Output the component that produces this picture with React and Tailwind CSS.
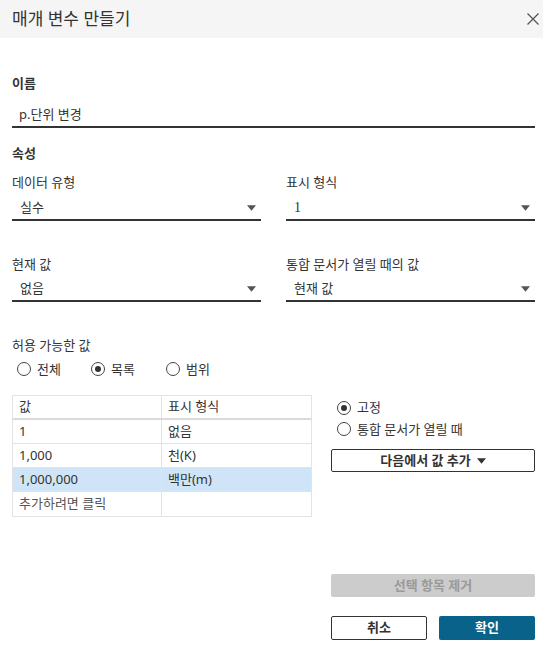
const FONT = { fontFamily: '"Noto Sans", "Noto Sans CJK KR", sans-serif' };

function Caret() {
  return (
    <svg width="9" height="6" viewBox="0 0 10 6" className="shrink-0">
      <path d="M0 0 H10 L5 6 Z" fill="#555" />
    </svg>
  );
}

function Select({ value, serif }) {
  return (
    <div className="flex h-[24px] items-center justify-between border-b-2 border-[#333] pl-[8px] pr-[5px]">
      <span
        className="text-[13px] text-[#333]"
        style={serif ? { fontFamily: '"Liberation Serif", serif', fontSize: 14 } : undefined}
      >
        {value}
      </span>
      <Caret />
    </div>
  );
}

function Radio({ checked, label }) {
  return (
    <label className="flex items-center gap-[6px] text-[13px] text-[#333]">
      <span className="flex h-[14px] w-[14px] items-center justify-center rounded-full border border-[#444] bg-white">
        {checked && <span className="h-[6px] w-[6px] rounded-full bg-[#333]" />}
      </span>
      <span>{label}</span>
    </label>
  );
}

const ROWS = [
  { v: "1", f: "없음" },
  { v: "1,000", f: "천(K)" },
  { v: "1,000,000", f: "백만(m)", selected: true },
  { v: "추가하려면 클릭", f: "", muted: true }
];

export default function App() {
  return (
    <div className="flex h-[652px] w-[543px] flex-col bg-white" style={FONT}>
      <header className="flex h-[38px] shrink-0 items-center justify-between bg-[#f5f5f5] pl-[12px] pr-[3px]">
        <span className="text-[17px] text-[#333]">매개 변수 만들기</span>
        <svg width="12" height="12" viewBox="0 0 12 12" className="mr-[1px]">
          <path d="M0.5 0.5 L11.5 11.5 M11.5 0.5 L0.5 11.5" stroke="#555" strokeWidth="1.3" />
        </svg>
      </header>

      <div className="flex flex-1 flex-col pl-[12px] pr-[8px]">
        <div className="mt-[36px] text-[13px] font-semibold text-[#333]">이름</div>
        <div className="mt-[10px] flex h-[24px] items-center border-b-2 border-[#333] pl-[7px] text-[13px] text-[#333]">
          p.단위 변경
        </div>

        <div className="mt-[16px] text-[13px] font-semibold text-[#333]">속성</div>

        <div className="mt-[10px] grid grid-cols-2 gap-x-[25px]">
          <div>
            <div className="text-[13px] text-[#333]">데이터 유형</div>
            <div className="mt-[4px]"><Select value="실수" /></div>
          </div>
          <div>
            <div className="text-[13px] text-[#333]">표시 형식</div>
            <div className="mt-[4px]"><Select value="1" serif /></div>
          </div>
        </div>

        <div className="mt-[34px] grid grid-cols-2 gap-x-[25px]">
          <div>
            <div className="text-[13px] text-[#333]">현재 값</div>
            <div className="mt-[4px]"><Select value="없음" /></div>
          </div>
          <div>
            <div className="text-[13px] text-[#333]">통합 문서가 열릴 때의 값</div>
            <div className="mt-[4px]"><Select value="현재 값" /></div>
          </div>
        </div>

        <div className="mt-[34px] text-[13px] text-[#333]">허용 가능한 값</div>
        <div className="mt-[4px] flex items-center pl-[5px]">
          <div className="w-[74px]"><Radio label="전체" /></div>
          <div className="w-[75px]"><Radio checked label="목록" /></div>
          <Radio label="범위" />
        </div>

        <div className="mt-[16px] flex items-start">
          <div className="w-[300px] shrink-0 border border-[#e3e3e3] text-[13px] text-[#333]">
            <div className="grid h-[24px] grid-cols-[149px_1fr] border-b-2 border-[#dadada]">
              <div className="flex items-center border-r border-[#e3e3e3] pl-[6px]">값</div>
              <div className="flex items-center pl-[6px]">표시 형식</div>
            </div>
            {ROWS.map((r, i) => (
              <div
                key={i}
                className={`grid h-[24px] grid-cols-[149px_1fr] ${i < ROWS.length - 1 ? "border-b border-[#e3e3e3]" : ""} ${r.selected ? "bg-[#cfe5f7]" : ""}`}
              >
                <div className={`flex items-center border-r border-[#e3e3e3] pl-[6px] ${r.muted ? "text-[#555]" : ""}`}>{r.v}</div>
                <div className="flex items-center pl-[6px]">{r.f}</div>
              </div>
            ))}
          </div>

          <div className="ml-[19px] flex flex-1 flex-col pt-[3px]">
            <div className="flex flex-col gap-[2px] pl-[6px]">
              <Radio checked label="고정" />
              <Radio label="통합 문서가 열릴 때" />
            </div>
            <button className="mt-[10px] flex h-[23px] w-[204px] items-center justify-center gap-[6px] rounded-[2px] border border-[#333] bg-white text-[13px] font-semibold text-[#333]">
              다음에서 값 추가
              <svg width="9" height="6" viewBox="0 0 10 6"><path d="M0 0 H10 L5 6 Z" fill="#333" /></svg>
            </button>
          </div>
        </div>

        <div className="mt-auto flex flex-col items-end pb-[12px]">
          <button className="h-[23px] w-[204px] rounded-[2px] bg-[#cccccc] text-[13px] font-semibold text-[#9a9a9a]">
            선택 항목 제거
          </button>
          <div className="mt-[19px] flex gap-[12px]">
            <button className="h-[24px] w-[96px] rounded-[2px] border border-[#333] bg-white text-[13px] font-semibold text-[#333]">
              취소
            </button>
            <button className="h-[24px] w-[96px] rounded-[2px] bg-[#08628a] text-[13px] font-semibold text-white">
              확인
            </button>
          </div>
        </div>
      </div>
    </div>
  );
}
